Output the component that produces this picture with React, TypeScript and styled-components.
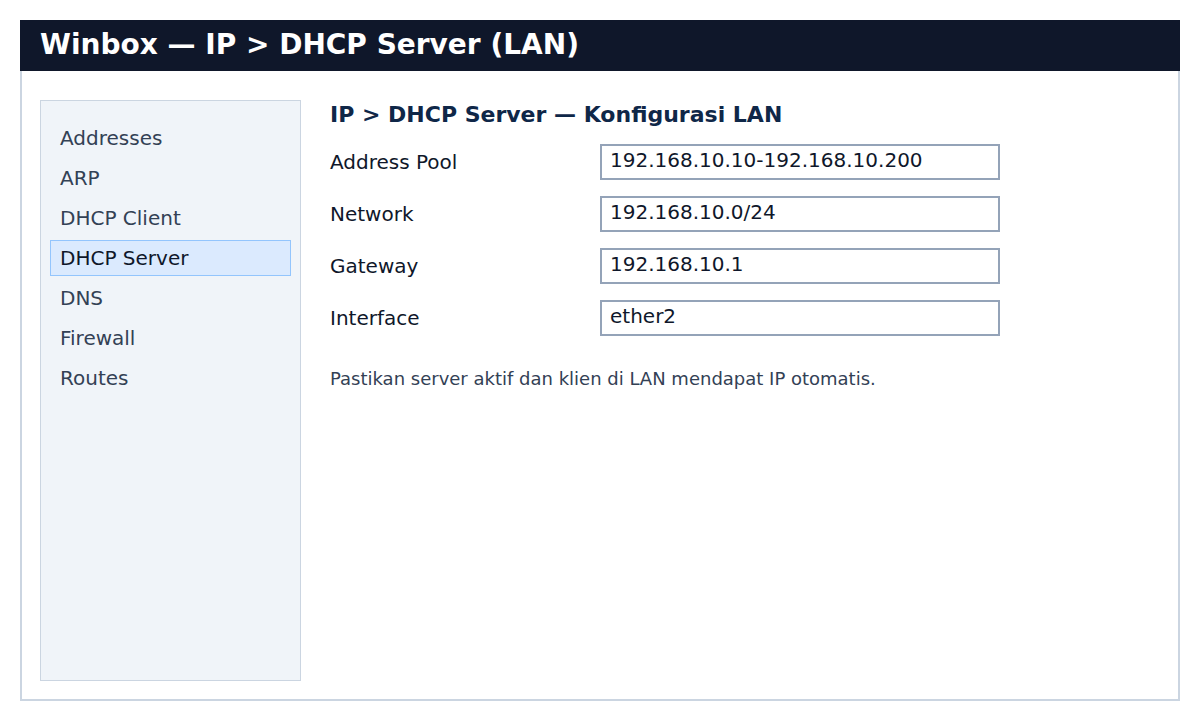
import styled, { createGlobalStyle } from "styled-components";

const GlobalStyle = createGlobalStyle`
    html, body {
        margin: 0;
        padding: 0;
        background: #ffffff;
    }
    body {
        font-family: "DejaVu Sans", "Noto Sans", sans-serif;
    }
    * {
        box-sizing: border-box;
    }
`

const Page = styled.div`
    padding: 20px;
`

const Window = styled.div`
    width: 1160px;
`

const TitleBar = styled.header`
    height: 51px;
    padding: 0 20px 2px 20px;
    display: flex;
    align-items: center;
    background-color: #0f172a;
    color: #ffffff;
    font-size: 28px;
    font-weight: bold;
`

const Body = styled.div`
    height: 630px;
    display: flex;
    gap: 29px;
    padding: 29px 18px 18px 18px;
    border: solid 2px #cbd5e1;
    border-top: none;
`

const Sidebar = styled.nav`
    width: 261px;
    flex-shrink: 0;
    display: flex;
    flex-direction: column;
    gap: 4px;
    padding: 19px 9px;
    background-color: #f0f4f9;
    border: solid 1px #cbd5e1;
`

const NavItem = styled.div<{ $active?: boolean }>`
    height: 36px;
    line-height: 34px;
    padding: 0 9px;
    font-size: 20px;
    color: ${(props) => props.$active ? "#0f172a" : "#334155"};
    background-color: ${(props) => props.$active ? "#dbeafe" : "transparent"};
    border: solid 1px ${(props) => props.$active ? "#93c5fd" : "transparent"};
`

const Content = styled.section`
    flex: 1;
    display: flex;
    flex-direction: column;
    gap: 16px;
`

const Heading = styled.h2`
    margin: 2px 0 1px 0;
    font-size: 22px;
    font-weight: bold;
    color: #0f2748;
`

const Row = styled.div`
    display: grid;
    grid-template-columns: 270px 400px;
    align-items: center;
`

const Label = styled.span`
    font-size: 20px;
    color: #0f172a;
`

const Field = styled.div`
    height: 36px;
    padding: 2px 8px;
    line-height: 24px;
    font-size: 20px;
    color: #0f172a;
    background-color: #ffffff;
    border: solid 2px #94a3b8;
`

const Note = styled.p`
    margin: 16px 0 0 0;
    font-size: 18px;
    color: #334155;
`

const navItems = ["Addresses", "ARP", "DHCP Client", "DHCP Server", "DNS", "Firewall", "Routes"];

const fields = [
    { label: "Address Pool", value: "192.168.10.10-192.168.10.200" },
    { label: "Network", value: "192.168.10.0/24" },
    { label: "Gateway", value: "192.168.10.1" },
    { label: "Interface", value: "ether2" },
];

const App = () => {
    return (
        <Page>
            <GlobalStyle />
            <Window>
                <TitleBar>Winbox — IP &gt; DHCP Server (LAN)</TitleBar>
                <Body>
                    <Sidebar>
                        {navItems.map((item) => (
                            <NavItem key={item} $active={item === "DHCP Server"}>{item}</NavItem>
                        ))}
                    </Sidebar>
                    <Content>
                        <Heading>IP &gt; DHCP Server — Konfigurasi LAN</Heading>
                        {fields.map((field) => (
                            <Row key={field.label}>
                                <Label>{field.label}</Label>
                                <Field>{field.value}</Field>
                            </Row>
                        ))}
                        <Note>Pastikan server aktif dan klien di LAN mendapat IP otomatis.</Note>
                    </Content>
                </Body>
            </Window>
        </Page>
    );
}

export default App;
